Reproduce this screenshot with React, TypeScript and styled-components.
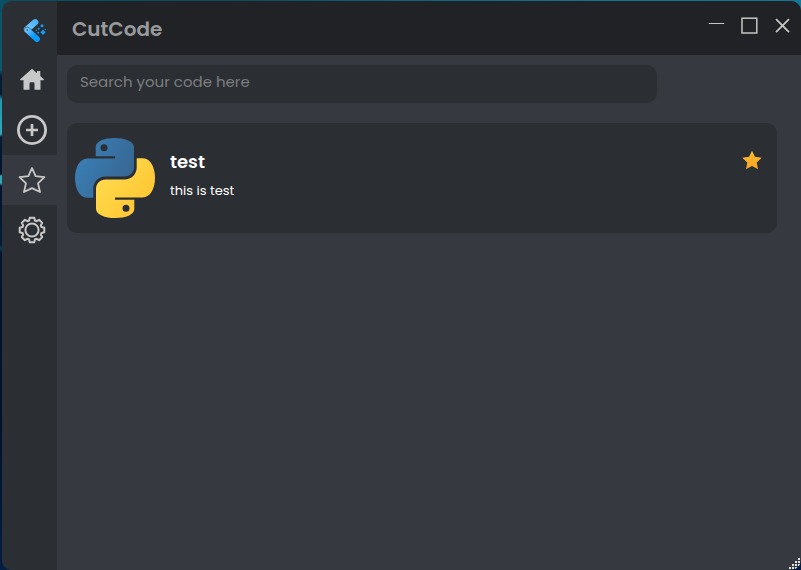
import React from "react";
import styled, { createGlobalStyle } from "styled-components";

const GlobalStyle = createGlobalStyle`
  * { box-sizing: border-box; }
  html, body { margin: 0; height: 100%; overflow: hidden; }
  body { font-family: "Poppins", "Inter", "Open Sans", sans-serif; }
`;

const Desktop = styled.div`
  width: 801px;
  height: 570px;
  padding: 1px 0 0 2px;
  background:
    linear-gradient(90deg, #075067, #0d4d62 31%, #126079 50%, #147390 75%, #137795) 0 0 / 100% 12px no-repeat,
    linear-gradient(180deg, #0b526c 0, #0b5871 70px, #061c32 76px, #061c32 94px, #2398ad 100px, #32a6b5 134px, #051b34 137px, #03132c 174px, #32a6b5 176px, #32a6b5 183px, #03132c 186px, #041c38 245px, #0b4253 248px, #04142f 253px, #02112c 420px, #031d43 570px);
`;

const Window = styled.div`
  display: flex;
  height: 569px;
  border-radius: 10px;
  overflow: hidden;
  background: #373940;
`;

const Sidebar = styled.nav`
  flex: 0 0 55px;
  background: #2b2e32;
`;

const LogoSlot = styled.div`
  height: 54px;
  padding: 17px 0 0 21px;
  svg { display: block; }
`;

const NavItem = styled.button<{ $active?: boolean }>`
  display: flex;
  align-items: center;
  justify-content: center;
  width: 55px;
  height: 50px;
  padding: 0 0 0 5px;
  border: 0;
  color: #c8c8c8;
  background: ${({ $active }) => ($active ? "#373940" : "transparent")};
`;

const Main = styled.main`
  flex: 1;
  display: flex;
  flex-direction: column;
  min-width: 0;
`;

const TitleBar = styled.header`
  display: flex;
  justify-content: space-between;
  height: 54px;
  padding-left: 15px;
  background: #212225;
`;

const Title = styled.h1`
  margin: 0;
  padding-top: 1px;
  color: #999a9c;
  font-size: 20px;
  font-weight: 600;
  line-height: 54px;
`;

const WindowControls = styled.div`
  padding: 14px 9px 0 0;
  svg { display: block; }
`;

const Content = styled.section`
  display: flex;
  flex: 1;
  flex-direction: column;
  gap: 20px;
  padding: 10px 24px 0 10px;
`;

const Search = styled.input`
  width: 590px;
  height: 38px;
  padding: 0 13px 6px;
  border: 0;
  border-radius: 10px;
  outline: 0;
  background: #2b2e32;
  color: #ddd;
  font: 400 15px "Poppins", "Inter", sans-serif;
  &::placeholder { color: #7d7f80; opacity: 1; }
`;

const Card = styled.article`
  display: flex;
  height: 110px;
  padding: 15px 15px 0 8px;
  border-radius: 10px;
  background: #2b2e32;
  color: #fff;
`;

const CardText = styled.div`
  flex: 1;
  padding: 11px 0 0 15px;
`;

const CardTitle = styled.h2`
  margin: 0;
  font-size: 18px;
  font-weight: 600;
  line-height: 25px;
`;

const Description = styled.p`
  margin: 8px 0 0;
  font-size: 13px;
  line-height: 18px;
`;

const Favorite = styled.div`
  padding-top: 12px;
  svg { display: block; }
`;

const Footer = styled.footer`
  display: flex;
  justify-content: flex-end;
  height: 13px;
`;

const STAR = "M12 .8 15.5 8.2 23.6 9.2 17.7 14.9 19.2 23 12 19.1 4.8 23 6.3 14.9.4 9.2 8.5 8.2Z";

const AppLogo = () => (
  <svg width="24" height="26" viewBox="0 0 24 26">
    <defs>
      <linearGradient id="logoTop" x1="0" y1="1" x2="1" y2="0"><stop stopColor="#75caff" /><stop offset="1" stopColor="#4bb4fb" /></linearGradient>
      <linearGradient id="logoLow" x1="0" y1="0" x2="1" y2="1"><stop stopColor="#67c3ff" /><stop offset=".65" stopColor="#0a9bff" /></linearGradient>
    </defs>
    <path d="M4 11.4 12.2 4.2" stroke="url(#logoTop)" strokeWidth="6.2" strokeLinecap="round" />
    <path d="M4.2 12.2 14 21" stroke="#2b2e32" strokeWidth="6.6" strokeLinecap="round" />
    <path d="M4.2 12.2 14 21" stroke="url(#logoLow)" strokeWidth="5.8" strokeLinecap="round" />
    <circle cx="4.2" cy="12" r=".8" fill="#2b2e32" />
    <g fill="#129eff"><circle cx="19" cy="7.8" r="1.5" /><circle cx="15.7" cy="10.8" r="1" /><circle cx="13.3" cy="12.2" r=".7" /><circle cx="15.2" cy="14.7" r=".9" /><path d="m20 11.7 2.6 2.6-2.6 2.6-2.6-2.6Z" /><circle cx="22.3" cy="11.4" r=".6" /></g>
  </svg>
);

const HomeIcon = () => (
  <svg width="24" height="24" viewBox="0 0 24 24"><path fill="currentColor" d="M12 .8 17 5.2V3h3.3v5.1L23.8 11.3v1h-3.3v9.4h-6v-6.3q0-1.2-1-1.2h-3q-1 0-1 1.2v6.3h-6v-9.4H.2v-1Z" /></svg>
);

const AddIcon = () => (
  <svg width="30" height="30" viewBox="0 0 30 30" fill="none" stroke="currentColor"><circle cx="15" cy="15" r="13.6" strokeWidth="2.8" /><path d="M15 9v12M9 15h12" strokeWidth="2.7" /></svg>
);

const StarIcon = () => (
  <svg width="28" height="28" viewBox="0 0 28 28"><path d="M14 2 17.6 10.2 26.4 11.1 20 17.3 22 26 14 22.1 6 26 8 17.3 1.6 11.1 10.4 10.2Z" fill="none" stroke="currentColor" strokeWidth="1.8" strokeLinejoin="round" /></svg>
);

const GearIcon = () => (
  <svg width="28" height="28" viewBox="0 0 28 28" fill="none" stroke="currentColor" strokeLinejoin="round">
    <path strokeWidth="2" d="M11.7 1.7h4.6l.6 2.8 1.8.7 2.4-1.4 3.1 3.1-1.4 2.4.7 1.8 2.8.6v4.6l-2.8.6-.7 1.8 1.4 2.4-3.1 3.1-2.4-1.4-1.8.7-.6 2.8h-4.6l-.6-2.8-1.8-.7-2.4 1.4-3.1-3.1 1.4-2.4-.7-1.8-2.8-.6v-4.6l2.8-.6.7-1.8-1.4-2.4 3.1-3.1 2.4 1.4 1.8-.7Z" />
    <circle cx="14" cy="14" r="6.6" strokeWidth="2" />
  </svg>
);

const PYTHON_HALF = "M20.7 18.3V9C20.7 3.3 29.3 0 39.7 0S59 3.4 59 9.3V29C59 34.6 55 38.5 49.3 38.5H30.5C23.5 38.5 18.3 44 18.3 50.5V59.7H12C4 59.7 0 49.8 0 40S4.3 20.5 12.5 20.5H40V18.3ZM25.5 9.7a3.5 3.5 0 1 0 7 0a3.5 3.5 0 1 0-7 0Z";

const PythonLogo = () => (
  <svg width="80" height="80" viewBox="0 0 80 80">
    <defs>
      <linearGradient id="pythonBlue" x1="0" y1=".2" x2="1" y2=".7"><stop stopColor="#3b80b8" /><stop offset="1" stopColor="#366590" /></linearGradient>
      <linearGradient id="pythonYellow" x1="1" y1="1" x2="0" y2=".2"><stop stopColor="#ffe052" /><stop offset="1" stopColor="#ffc331" /></linearGradient>
    </defs>
    <path fill="url(#pythonBlue)" fillRule="evenodd" d={PYTHON_HALF} />
    <path fill="url(#pythonYellow)" fillRule="evenodd" d={PYTHON_HALF} transform="rotate(180 40 40)" />
  </svg>
);

const ControlsIcon = () => (
  <svg width="84" height="22" viewBox="0 0 84 22" fill="none" stroke="#c6c6c2">
    <path d="M.8 8.5h15.4" strokeWidth="1.2" />
    <rect x="34" y="3.2" width="14.8" height="14.8" strokeWidth="1.5" />
    <path d="m68 4.1 13 13m0-13-13 13" strokeWidth="1.8" />
  </svg>
);

const FavoriteIcon = () => (
  <svg width="20" height="20" viewBox="0 0 24 24">
    <defs><linearGradient id="favoriteGold" x1="0" y1="0" x2="0" y2="1"><stop stopColor="#fdbd34" /><stop offset="1" stopColor="#f8a31d" /></linearGradient></defs>
    <path d={STAR} fill="url(#favoriteGold)" />
  </svg>
);

const ResizeGrip = () => (
  <svg width="13" height="13" viewBox="0 0 13 13">
    <path fill="#03445b" d="M9 13 13 7v6Z" />
    <path fill="#e4e4e6" d="M10 1h2v2h-2zM7 4h2v2H7zM10 4h2v2h-2zM4 7h2v2H4zM7 7h2v2H7zM10 7h2v2h-2zM1 10h2v2H1zM4 10h2v2H4zM7 10h2v2H7zM10 10h1v1h-1z" />
  </svg>
);

export default function App() {
  return (
    <>
      <GlobalStyle />
      <Desktop>
        <Window>
          <Sidebar>
            <LogoSlot><AppLogo /></LogoSlot>
            <NavItem aria-label="Home"><HomeIcon /></NavItem>
            <NavItem aria-label="Add"><AddIcon /></NavItem>
            <NavItem aria-label="Favorites" $active><StarIcon /></NavItem>
            <NavItem aria-label="Settings"><GearIcon /></NavItem>
          </Sidebar>
          <Main>
            <TitleBar>
              <Title>CutCode</Title>
              <WindowControls><ControlsIcon /></WindowControls>
            </TitleBar>
            <Content>
              <Search placeholder="Search your code here" />
              <Card>
                <PythonLogo />
                <CardText>
                  <CardTitle>test</CardTitle>
                  <Description>this is test</Description>
                </CardText>
                <Favorite><FavoriteIcon /></Favorite>
              </Card>
            </Content>
            <Footer><ResizeGrip /></Footer>
          </Main>
        </Window>
      </Desktop>
    </>
  );
}
